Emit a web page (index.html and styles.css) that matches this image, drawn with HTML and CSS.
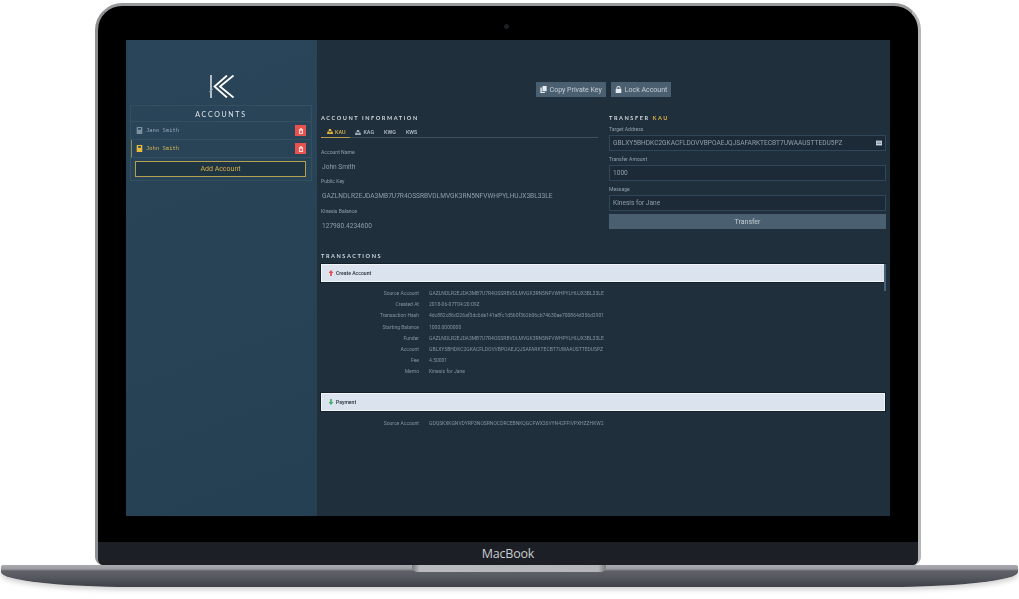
FILE: index.html
```html
<!DOCTYPE html>
<html lang="en">
<head>
<meta charset="utf-8">
<title>Kinesis Wallet on MacBook</title>
<link rel="stylesheet" href="styles.css">
</head>
<body>
<div class="laptop">
  <div class="lid">
    <span class="camera"></span>
    <div class="screen">
      <aside class="sidebar">
        <svg class="logo" viewBox="0 0 25 23" width="25" height="23" fill="none" stroke="#fff" stroke-width="1.8">
          <path d="M2 0V23" stroke-width="1.3"/>
          <path d="M0 17L4 14" stroke="#8fa3b3" stroke-width="0.8"/>
          <path d="M18 0.5L5.5 11.5L18 22.5"/>
          <path d="M24.5 0.5L11 11.5L24.5 22.5"/>
        </svg>
        <section class="accounts">
          <h2 class="accounts-title">ACCOUNTS</h2>
          <div class="account">
            <svg class="book" viewBox="0 0 10 10" width="7" height="7"><path fill="#7e909e" d="M1 0h8v10H1zM3 1.5v2.5h4V1.5z" fill-rule="evenodd"/></svg>
            <span class="account-name">Jane Smith</span>
            <span class="trash"><svg viewBox="0 0 10 10" width="6" height="6"><path fill="#fff" d="M1.5 1.5h2V.6h3v.9h2v1h-7zM2 3h6v7H2zM3.5 4.3v4.4h3V4.3z" fill-rule="evenodd"/></svg></span>
          </div>
          <div class="account account-active">
            <svg class="book" viewBox="0 0 10 10" width="7" height="7"><path fill="#e8b93a" d="M1 0h8v10H1zM3 1.5v2.5h4V1.5z" fill-rule="evenodd"/></svg>
            <span class="account-name">John Smith</span>
            <span class="trash"><svg viewBox="0 0 10 10" width="6" height="6"><path fill="#fff" d="M1.5 1.5h2V.6h3v.9h2v1h-7zM2 3h6v7H2zM3.5 4.3v4.4h3V4.3z" fill-rule="evenodd"/></svg></span>
          </div>
          <button class="add-account">Add Account</button>
        </section>
      </aside>
      <main class="main">
        <div class="actions">
          <button class="action"><svg viewBox="0 0 10 10" width="7" height="7"><path fill="#e4eaef" d="M3.5 0H9.5V7.5H3.5zM0.5 2H2.6V8.6H7V10H0.5z"/></svg>Copy Private Key</button>
          <button class="action"><svg viewBox="0 0 10 10" width="7" height="7"><path fill="#e4eaef" fill-rule="evenodd" d="M1 4.4h1V3a3 3 0 0 1 6 0v1.4h1V10H1zM3.4 4.4h3.2V3a1.6 1.6 0 0 0-3.2 0z"/></svg>Lock Account</button>
        </div>
        <div class="columns">
          <section class="info">
            <h2 class="heading">ACCOUNT INFORMATION</h2>
            <nav class="tabs">
              <span class="tab tab-active"><svg viewBox="0 0 12 10" width="6" height="5"><path fill="#e8b93a" d="M4 0h4l1 4H3zM1 5h4l1 5H0zM7 5h4l1 5H6z"/></svg>KAU</span>
              <span class="tab"><svg viewBox="0 0 12 10" width="6" height="5"><path fill="#9fb0bd" d="M4 0h4l1 4H3zM1 5h4l1 5H0zM7 5h4l1 5H6z"/></svg>KAG</span>
              <span class="tab">KWG</span>
              <span class="tab">KWS</span>
            </nav>
            <div class="fields">
              <div class="label">Account Name</div>
              <div class="value">John Smith</div>
              <div class="label">Public Key</div>
              <div class="value">GAZLNDLR2EJDA3MB7U7R4OSSRBVDLMVGK3RN5NFVWHPYLHUJX3BL33LE</div>
              <div class="label">Kinesis Balance</div>
              <div class="value">127980.4234600</div>
            </div>
          </section>
          <section class="transfer">
            <h2 class="heading">TRANSFER <span class="gold">KAU</span></h2>
            <div class="form-field">
              <div class="label">Target Address</div>
              <div class="input input-icon">GBLXY5BHDKC2GKACFLDOVVBPOAEJQJSAFARKTECBT7UWAAUSTTEDU5PZ<svg viewBox="0 0 10 10" width="6" height="6"><path fill="#cfd8df" d="M0 1h10v8H0z"/><path stroke="#33495a" stroke-width=".8" d="M1 3.5h8M1 6h8"/></svg></div>
            </div>
            <div class="form-field">
              <div class="label">Transfer Amount</div>
              <div class="input">1000</div>
            </div>
            <div class="form-field">
              <div class="label">Message</div>
              <div class="input">Kinesis for Jane</div>
            </div>
            <button class="transfer-btn">Transfer</button>
          </section>
        </div>
        <h2 class="heading tx-heading">TRANSACTIONS</h2>
        <div class="tx-list">
          <span class="thumb"></span>
          <div class="tx-head"><svg viewBox="0 0 10 10" width="6" height="6"><path fill="#e5484d" d="M5 0l4 5H6.4v5H3.6V5H1z"/></svg>Create Account</div>
          <dl class="tx-body">
            <dt>Source Account</dt><dd>GAZLNDLR2EJDA3MB7U7R4OSSRBVDLMVGK3RN5NFVWHPYLHUJX3BL33LE</dd>
            <dt>Created At</dt><dd>2018-06-07T04:20:09Z</dd>
            <dt>Transaction Hash</dt><dd>4dc882c86d226af3dc6de141a8fc1d560f362b06cb74630ae700864d356d2901</dd>
            <dt>Starting Balance</dt><dd>1000.0000000</dd>
            <dt>Funder</dt><dd>GAZLNDLR2EJDA3MB7U7R4OSSRBVDLMVGK3RN5NFVWHPYLHUJX3BL33LE</dd>
            <dt>Account</dt><dd>GBLXY5BHDKC2GKACFLDOVVBPOAEJQJSAFARKTECBT7UWAAUSTTEDU5PZ</dd>
            <dt>Fee</dt><dd>4.50001</dd>
            <dt>Memo</dt><dd>Kinesis for Jane</dd>
          </dl>
          <div class="tx-head"><svg viewBox="0 0 10 10" width="6" height="6"><path fill="#3fae6a" d="M5 10L1 5h2.6V0h2.8v5H9z"/></svg>Payment</div>
          <dl class="tx-body">
            <dt>Source Account</dt><dd>GDQSKXKGNVDYRP3NOSRNOCDRCEBNKQGCFWX26VYN42FFIVPXHZZHKW2</dd>
          </dl>
        </div>
      </main>
    </div>
    <div class="chin">MacBook</div>
  </div>
  <div class="base">
    <span class="notch"></span>
  </div>
</div>
</body>
</html>
```

FILE: styles.css
```css
* { box-sizing: border-box; }
html, body { margin: 0; height: 100%; background: #fff; overflow: hidden; }
body { font-family: Roboto, "Liberation Sans", sans-serif; }
h2, dl, dd { margin: 0; }
button { font-family: inherit; border: 0; padding: 0; }

.laptop { padding-top: 3px; width: 1019px; }
.lid {
  position: relative;
  width: 826px;
  height: 562px;
  margin-left: 95px;
  padding: 34px 28px 0 28px;
  background: #000;
  border: 3px solid #8d8f92;
  border-right-color: #b4b5b7;
  border-bottom: 0;
  border-top-color: #97999b;
  border-radius: 27px 27px 8px 8px;
  display: flex;
  flex-direction: column;
}
.camera {
  position: absolute;
  top: 18px;
  left: 406px;
  width: 5px;
  height: 5px;
  border-radius: 50%;
  background: #1a2026;
}
.screen { display: flex; width: 764px; height: 476px; flex: none; filter: blur(.3px); }
.chin {
  margin: 26px -28px 0;
  height: 23px;
  border-radius: 0 0 6px 6px;
  background: #1c2026;
  color: #c9cbce;
  font: 12.5px/24px "Open Sans", "Liberation Sans", sans-serif;
  text-align: center;
  letter-spacing: -.2px;
}

.base {
  position: relative;
  width: 1017px;
  height: 22px;
  margin-left: 1px;
  background: linear-gradient(#a9abb0 0, #9a9ca1 4px, #5f6268 6px, #54575e 13px, #3d4047 22px);
  border-radius: 2px 2px 130px 130px / 2px 2px 15px 15px;
  box-shadow: 0 3px 5px rgba(0, 0, 0, .18);
}
.notch {
  position: absolute;
  top: 0;
  left: 411px;
  width: 194px;
  height: 7px;
  background: linear-gradient(90deg, #77797d 0, #b9bbbf 4%, #b4b6ba 96%, #77797d 100%);
  border-radius: 0 0 5px 5px;
}

.sidebar {
  width: 191px;
  flex: none;
  padding: 35px 4px 0;
  background: linear-gradient(160deg, #2a4559, #264053);
  display: flex;
  flex-direction: column;
  align-items: stretch;
}
.logo { align-self: center; flex: none; }
.accounts {
  margin-top: 7px;
  border: 1px solid #34505f;
  width: 182px;
  padding-bottom: 3px;
}
.accounts-title {
  height: 16px;
  font: 400 7px/16px Lato, "Open Sans", sans-serif;
  letter-spacing: 1.7px;
  color: #dfe6ec;
  text-align: center;
  border-bottom: 1px solid #34505f;
}
.account {
  height: 18px;
  display: flex;
  align-items: center;
  padding: 0 5px;
  border-bottom: 1px solid #34505f;
  font: 5.5px/1 "DejaVu Sans Mono", "Liberation Mono", monospace;
  color: #98a7b3;
}
.account-active { color: #d9b54c; border-left: 1px solid #8b8a58; padding-left: 4px; }
.account-name { margin-left: 1px; padding-left: 2px; flex: 1; padding-top: 1px; }
.trash {
  width: 11px;
  height: 11px;
  background: #e9524f;
  display: flex;
  align-items: center;
  justify-content: center;
}
.add-account {
  display: block;
  width: 171px;
  height: 16px;
  margin: 3px 0 0 4px;
  background: #203542;
  border: 1px solid #b5a052;
  color: #d4ae48;
  font-size: 7px;
}

.main {
  flex: 1;
  min-width: 0;
  background: #1f2f3c;
  padding: 42px 4px 0;
  overflow: hidden;
}
.actions { display: flex; justify-content: center; gap: 5px; height: 15px; }
.action {
  display: flex;
  align-items: center;
  gap: 3px;
  padding: 0 4px;
  background: #4a5f6f;
  color: #c5ced6;
  font-size: 7px;
  height: 15px;
}
.columns {
  display: grid;
  grid-template-columns: 277px 277px;
  column-gap: 11px;
  margin-top: 16px;
  height: 123px;
}
.heading {
  height: 10px;
  font: 700 5.6px/10px Lato, "Open Sans", sans-serif;
  letter-spacing: 1.55px;
  color: #cfd8df;
}
.gold { color: #e2b03c; }
.tabs {
  display: flex;
  height: 12px;
  margin-top: 3px;
  border-bottom: 1px solid #3c5060;
}
.tab {
  display: flex;
  align-items: center;
  gap: 2px;
  padding: 0 5px;
  font-size: 5.4px;
  font-weight: 500;
  color: #b4c0ca;
  height: 12px;
}
.tab-active { color: #d9b24a; border-bottom: 1px solid #b59a4a; padding-left: 6px; }
.fields { padding-top: 8.5px; }
.label {
  height: 10px;
  font-size: 5.1px;
  line-height: 10px;
  color: #8fa0ad;
}
.value {
  height: 19.8px;
  padding-left: 1px;
  font-size: 6.6px;
  line-height: 21.4px;
  color: #8f9fac;
  white-space: nowrap;
}
.form-field { margin-top: 1px; margin-bottom: 3px; }
.form-field .label { margin-bottom: 1px; }
.input {
  height: 16px;
  padding: 0 3px;
  font-size: 6.6px;
  line-height: 16px;
  color: #8f9fac;
  background: #1b2a36;
  border: 1px solid #30475a;
  white-space: nowrap;
  display: flex;
  justify-content: space-between;
  align-items: center;
}
.transfer-btn {
  display: block;
  width: 100%;
  height: 15px;
  margin-top: 2px;
  background: #4a5f6f;
  color: #c5ced6;
  font-size: 7px;
}
.tx-heading { margin-top: 15px; }
.tx-list { position: relative; margin-top: 3px; width: 565px; padding-right: 1px; }
.thumb {
  position: absolute;
  top: 0;
  right: 0;
  width: 2px;
  height: 27px;
  background: #4b6172;
}
.tx-head {
  display: flex;
  align-items: center;
  gap: 2px;
  height: 18px;
  padding-left: 6px;
  background: #dbe4ee;
  border: 1px solid #f1f5f8;
  outline: 1px solid #14212b;
  font-size: 5.1px;
  font-weight: 500;
  color: #1e2a34;
}
.tx-body {
  display: grid;
  grid-template-columns: 98px 1fr;
  column-gap: 10px;
  grid-auto-rows: 11.15px;
  padding-top: 6.2px;
  margin-bottom: 16px;
  font-size: 5px;
  line-height: 11.15px;
  color: #83949f;
  white-space: nowrap;
}
.tx-body dt { text-align: right; }
```
